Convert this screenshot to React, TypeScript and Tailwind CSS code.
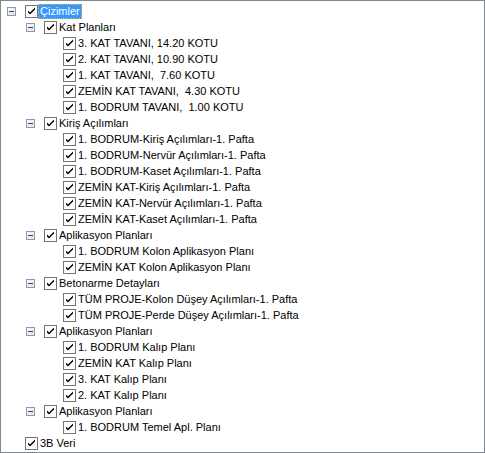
import React from 'react';

type Node = {
  label: string;
  children?: Node[];
  selected?: boolean;
};

const tree: Node[] = [
  {
    label: 'Çizimler',
    selected: true,
    children: [
      {
        label: 'Kat Planları',
        children: [
          { label: '3. KAT TAVANI, 14.20 KOTU' },
          { label: '2. KAT TAVANI, 10.90 KOTU' },
          { label: '1. KAT TAVANI,  7.60 KOTU' },
          { label: 'ZEMİN KAT TAVANI,  4.30 KOTU' },
          { label: '1. BODRUM TAVANI,  1.00 KOTU' },
        ],
      },
      {
        label: 'Kiriş Açılımları',
        children: [
          { label: '1. BODRUM-Kiriş Açılımları-1. Pafta' },
          { label: '1. BODRUM-Nervür Açılımları-1. Pafta' },
          { label: '1. BODRUM-Kaset Açılımları-1. Pafta' },
          { label: 'ZEMİN KAT-Kiriş Açılımları-1. Pafta' },
          { label: 'ZEMİN KAT-Nervür Açılımları-1. Pafta' },
          { label: 'ZEMİN KAT-Kaset Açılımları-1. Pafta' },
        ],
      },
      {
        label: 'Aplikasyon Planları',
        children: [
          { label: '1. BODRUM Kolon Aplikasyon Planı' },
          { label: 'ZEMİN KAT Kolon Aplikasyon Planı' },
        ],
      },
      {
        label: 'Betonarme Detayları',
        children: [
          { label: 'TÜM PROJE-Kolon Düşey Açılımları-1. Pafta' },
          { label: 'TÜM PROJE-Perde Düşey Açılımları-1. Pafta' },
        ],
      },
      {
        label: 'Aplikasyon Planları',
        children: [
          { label: '1. BODRUM Kalıp Planı' },
          { label: 'ZEMİN KAT Kalıp Planı' },
          { label: '3. KAT Kalıp Planı' },
          { label: '2. KAT Kalıp Planı' },
        ],
      },
      {
        label: 'Aplikasyon Planları',
        children: [{ label: '1. BODRUM Temel Apl. Planı' }],
      },
    ],
  },
  { label: '3B Veri' },
];

// indentation per depth (19px steps)
const indent = ['pl-[1px]', 'pl-[20px]', 'pl-[39px]'];

function Expander() {
  return (
    <svg width="9" height="9" viewBox="0 0 9 9" className="block">
      <defs>
        <linearGradient id="exp" x1="0" y1="0" x2="1" y2="1">
          <stop offset="0" stopColor="#ffffff" />
          <stop offset="1" stopColor="#d6dbe2" />
        </linearGradient>
      </defs>
      <rect x="0.5" y="0.5" width="8" height="8" fill="url(#exp)" stroke="#8d9aab" />
      <rect x="2" y="4" width="5" height="1" fill="#2b4266" />
    </svg>
  );
}

function CheckBox() {
  return (
    <svg width="13" height="13" viewBox="0 0 13 13" className="block shrink-0">
      <rect x="0.5" y="0.5" width="12" height="12" fill="#ffffff" stroke="#747474" />
      <path d="M3 5.5 L5 7.5 L10 2.5 L10 4.5 L5 9.5 L3 7.5 Z" fill="#000000" />
    </svg>
  );
}

function Row({ node, depth }: { node: Node; depth: number }) {
  const hasKids = !!node.children?.length;
  return (
    <>
      <div className={`flex h-[16px] items-center ${indent[depth]}`}>
        <div className="flex w-[23px] shrink-0 items-center pl-[5px]">
          {hasKids && <Expander />}
        </div>
        <CheckBox />
        <span
          className={
            node.selected
              ? 'flex h-[15px] items-center border border-dotted border-[#f0b040] bg-[#3399ff] pl-[1px] pr-[1px] text-white'
              : 'flex h-[15px] items-center border border-transparent pl-[1px] pr-[1px] text-black'
          }
        >
          <span className="whitespace-pre">{node.label}</span>
        </span>
      </div>
      {node.children?.map((c, i) => <Row key={i} node={c} depth={depth + 1} />)}
    </>
  );
}

export default function App() {
  return (
    <div className="h-[453px] w-[485px] border border-[#828790] bg-white pt-[2px] font-['Liberation_Sans',Arial,sans-serif] text-[11px] leading-none">
      {tree.map((n, i) => (
        <Row key={i} node={n} depth={0} />
      ))}
    </div>
  );
}
